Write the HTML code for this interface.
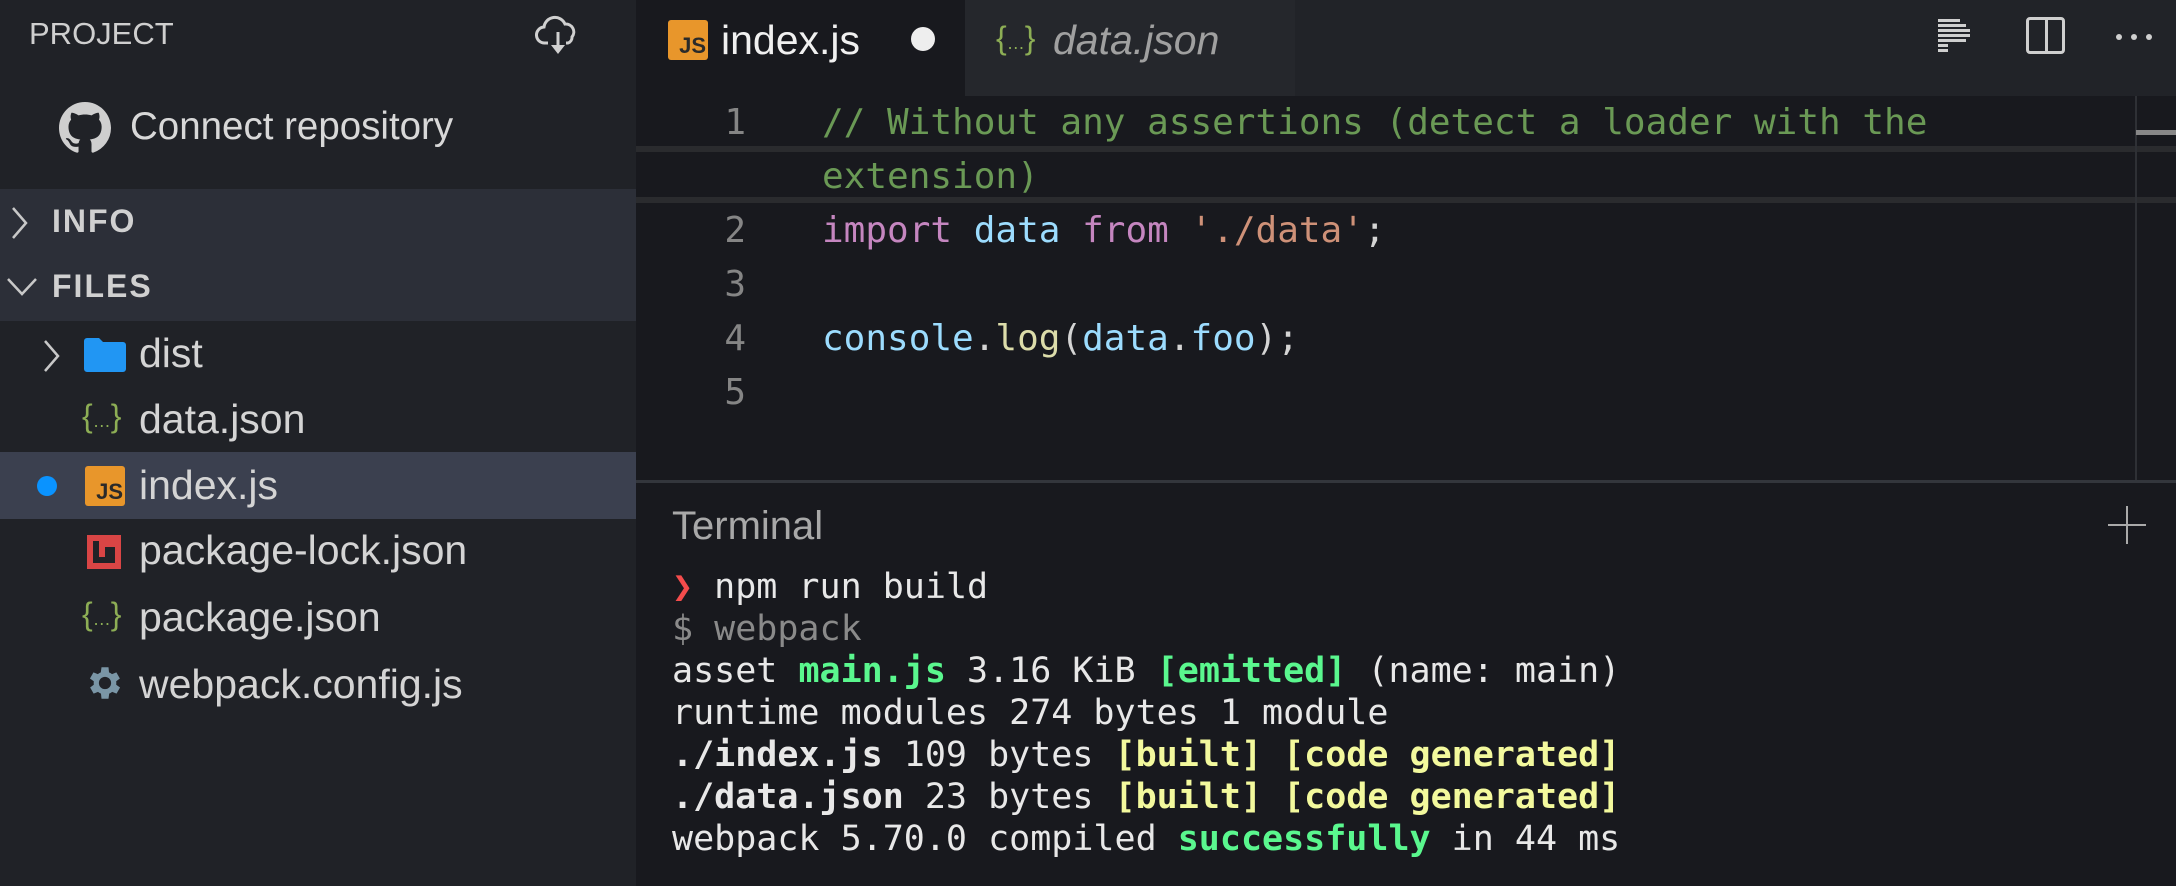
<!DOCTYPE html>
<html><head><meta charset="utf-8"><style>
*{margin:0;padding:0;box-sizing:border-box}
body{width:2176px;height:886px;background:#18191e;overflow:hidden;position:relative;font-family:"Liberation Sans",sans-serif}
.a{position:absolute;white-space:pre}
.side{position:absolute;left:0;top:0;width:636px;height:886px;background:#202227}
.ui{font-size:41px;color:#d4d4d4}
.mono{font-family:"DejaVu Sans Mono","Liberation Mono",monospace}
.code{font-size:36px;color:#d4d4d4}
.term{font-size:35px;color:#e8e8e8}
.g{color:#6a9955}.k{color:#c586c0}.v{color:#9cdcfe}.s{color:#ce9178}.f{color:#dcdcaa}
.tg{color:#5af78e;font-weight:bold}.ty{color:#f3f99d;font-weight:bold}
.js{position:absolute;width:40px;height:40px;background:#e8962b;border-radius:3px;color:#2a2a2a;font:bold 22px "Liberation Sans",sans-serif;text-align:right;padding:15px 2px 0 0;line-height:22px}
.br{color:#8dae55;font-size:32px}
</style></head><body>
<div class="side">
  <div class="a ui" style="left:29px;top:16px;font-size:31px;color:#cfcfcf">PROJECT</div>
  <svg class="a" style="left:535px;top:14px" width="46" height="42" viewBox="0 0 46 42"><path d="M13 29H10a8 8 0 0 1-1-16 11 11 0 0 1 21-3 8 8 0 0 1 7 13 6 6 0 0 1-4 6h-2" fill="none" stroke="#d0d0d0" stroke-width="3"/><path d="M23 18v14" stroke="#d0d0d0" stroke-width="3"/><path d="M16 31l7 9 7-9z" fill="#d0d0d0"/></svg>
  <svg class="a" style="left:59px;top:102px" width="52" height="52" viewBox="0 0 16 16"><path fill="#cfcfcf" d="M8 0C3.58 0 0 3.58 0 8c0 3.54 2.29 6.53 5.47 7.59.4.07.55-.17.55-.38 0-.19-.01-.82-.01-1.49-2.01.37-2.530-.49-2.69-.94-.09-.23-.48-.94-.82-1.13-.28-.15-.68-.52-.01-.53.63-.01 1.08.58 1.23.82.72 1.21 1.87.87 2.33.66.07-.52.28-.87.51-1.07-1.78-.2-3.64-.89-3.64-3.95 0-.87.31-1.59.82-2.150-.08-.2-.36-1.02.08-2.12 0 0 .67-.21 2.2.82.64-.18 1.32-.27 2-.27.68 0 1.36.09 2 .27 1.53-1.04 2.2-.82 2.2-.82.44 1.1.16 1.92.08 2.12.51.56.82 1.27.82 2.15 0 3.07-1.87 3.75-3.65 3.95.29.25.54.73.54 1.48 0 1.07-.01 1.93-.01 2.2 0 .21.15.46.55.38A8.013 8.013 0 0 0 16 8c0-4.42-3.58-8-8-8z"/></svg>
  <div class="a ui" style="left:130px;top:105px;font-size:38.5px;color:#d8d8d8">Connect repository</div>
  <div class="a" style="left:0;top:189px;width:636px;height:132px;background:#2c2f38"></div>
  <svg class="a" style="left:10px;top:205px" width="20" height="36"><path d="M3 3l13 15L3 33" fill="none" stroke="#c8c8c8" stroke-width="2.5"/></svg>
  <div class="a ui" style="left:52px;top:203px;font-size:32px;font-weight:bold;letter-spacing:2px;color:#d0d0d0">INFO</div>
  <svg class="a" style="left:6px;top:276px" width="32" height="22"><path d="M2 3l14 15L30 3" fill="none" stroke="#c8c8c8" stroke-width="2.5"/></svg>
  <div class="a ui" style="left:52px;top:268px;font-size:32px;font-weight:bold;letter-spacing:2px;color:#d0d0d0">FILES</div>
  <svg class="a" style="left:42px;top:338px" width="20" height="36"><path d="M3 3l13 15L3 33" fill="none" stroke="#c8c8c8" stroke-width="2.5"/></svg>
  <svg class="a" style="left:84px;top:338px" width="42" height="34"><path d="M3 0h12l4 4h20a3 3 0 0 1 3 3v24a3 3 0 0 1-3 3H3a3 3 0 0 1-3-3V3a3 3 0 0 1 3-3z" fill="#2196f3"/></svg>
  <div class="a ui" style="left:139px;top:330px">dist</div>
  <div class="a br" style="left:82px;top:398px">{<span style="font-size:18px">…</span>}</div>
  <div class="a ui" style="left:139px;top:396px">data.json</div>
  <div class="a" style="left:0;top:452px;width:636px;height:67px;background:#3b404f"></div>
  <div class="a" style="left:37px;top:476px;width:20px;height:20px;border-radius:50%;background:#0a93ff"></div>
  <div class="js" style="left:85px;top:466px">JS</div>
  <div class="a ui" style="left:139px;top:462px">index.js</div>
  <div class="a" style="left:87px;top:535px;width:34px;height:34px;border:6px solid #d94545"><div style="position:absolute;left:6px;top:0;width:6px;height:16px;background:#d94545"></div><div style="position:absolute;left:6px;top:0;width:16px;height:6px;background:#d94545"></div></div>
  <div class="a ui" style="left:139px;top:527px">package-lock.json</div>
  <div class="a br" style="left:82px;top:596px">{<span style="font-size:18px">…</span>}</div>
  <div class="a ui" style="left:139px;top:594px">package.json</div>
  <svg class="a" style="left:84px;top:662px" width="42" height="42" viewBox="0 0 24 24"><path fill="#7a96a6" d="M19.4 13a7.5 7.5 0 0 0 0-2l2.1-1.6-2-3.5-2.5 1a7 7 0 0 0-1.7-1L15 3h-4l-.4 2.9a7 7 0 0 0-1.7 1l-2.5-1-2 3.5L6.6 11a7.5 7.5 0 0 0 0 2l-2.1 1.6 2 3.5 2.5-1a7 7 0 0 0 1.7 1L11 21h4l.4-2.9a7 7 0 0 0 1.7-1l2.5 1 2-3.5zM13 15.5a3.5 3.5 0 1 1 0-7 3.5 3.5 0 0 1 0 7z" transform="translate(-1 0)"/></svg>
  <div class="a ui" style="left:139px;top:661px">webpack.config.js</div>
</div>
<!-- tab bar -->
<div class="a" style="left:636px;top:0;width:1540px;height:96px;background:#212328"></div>
<div class="a" style="left:636px;top:0;width:329px;height:96px;background:#18191e"></div>
<div class="a" style="left:965px;top:0;width:330px;height:96px;background:#25272c"></div>
<div class="js" style="left:668px;top:20px">JS</div>
<div class="a ui" style="left:721px;top:17px;color:#f0f0f0">index.js</div>
<div class="a" style="left:911px;top:27px;width:24px;height:24px;border-radius:50%;background:#eee"></div>
<div class="a br" style="left:996px;top:20px">{<span style="font-size:18px">…</span>}</div>
<div class="a ui" style="left:1053px;top:17px;font-style:italic;color:#a0a0a0">data.json</div>
<svg class="a" style="left:1938px;top:18px" width="34" height="38"><g fill="#cfcfcf"><rect x="0" y="1" width="22" height="3"/><rect x="0" y="6" width="28" height="3"/><rect x="0" y="11" width="32" height="3"/><rect x="0" y="16" width="32" height="3"/><rect x="0" y="21" width="28" height="3"/><rect x="0" y="26" width="10" height="3"/><rect x="0" y="31" width="10" height="3"/></g></svg>
<div class="a" style="left:2026px;top:17px;width:39px;height:37px;border:3px solid #cfcfcf;border-radius:4px"><div style="position:absolute;left:16px;top:0;width:3px;height:31px;background:#cfcfcf"></div></div>
<div class="a" style="left:2116px;top:34px;width:6px;height:6px;border-radius:50%;background:#cfcfcf"></div>
<div class="a" style="left:2131px;top:34px;width:6px;height:6px;border-radius:50%;background:#cfcfcf"></div>
<div class="a" style="left:2146px;top:34px;width:6px;height:6px;border-radius:50%;background:#cfcfcf"></div>
<!-- editor -->
<div class="a" style="left:636px;top:146px;width:1540px;height:57px;border-top:6px solid #2a2b2e;border-bottom:6px solid #2a2b2e"></div>
<div class="a" style="left:2135px;top:96px;width:2px;height:384px;background:#2e3035"></div>
<div class="a" style="left:2136px;top:130px;width:40px;height:5px;background:#888"></div>
<div class="a mono code" style="left:636px;top:96px;width:110px;text-align:right;color:#858585;line-height:54px">1

2
3
4
5</div>
<div class="a mono code" style="left:822px;top:96px;line-height:54px"><span class="g">// Without any assertions (detect a loader with the
extension)</span>
<span class="k">import</span> <span class="v">data</span> <span class="k">from</span> <span class="s">'./data'</span>;

<span class="v">console</span>.<span class="f">log</span>(<span class="v">data</span>.<span class="v">foo</span>);
</div>
<!-- terminal -->
<div class="a" style="left:636px;top:480px;width:1540px;height:3px;background:#33363c"></div>
<div class="a ui" style="left:672px;top:504px;font-size:40px;color:#a8a8a8">Terminal</div>
<div class="a" style="left:2108px;top:524px;width:38px;height:2px;background:#aaa"></div>
<div class="a" style="left:2126px;top:506px;width:2px;height:38px;background:#aaa"></div>
<div class="a mono term" style="left:672px;top:566px;line-height:42px"><span style="color:#f44c4c">❯</span> npm run build
<span style="color:#8a8a8a">$ webpack</span>
asset <span class="tg">main.js</span> 3.16 KiB <span class="tg">[emitted]</span> (name: main)
runtime modules 274 bytes 1 module
<b>./index.js</b> 109 bytes <span class="ty">[built] [code generated]</span>
<b>./data.json</b> 23 bytes <span class="ty">[built] [code generated]</span>
webpack 5.70.0 compiled <span class="tg">successfully</span> in 44 ms</div>
</body></html>
